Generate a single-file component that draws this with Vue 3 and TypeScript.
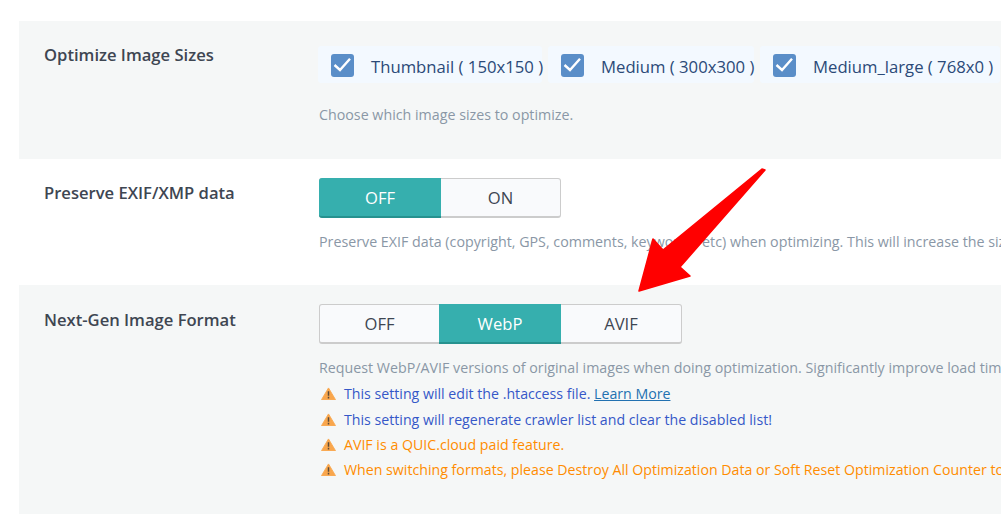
<script setup lang="ts">
interface Size { label: string; width: number }
const sizes: Size[] = [
  { label: 'Thumbnail ( 150x150 )', width: 224 },
  { label: 'Medium ( 300x300 )', width: 206 },
  { label: 'Medium_large ( 768x0 )', width: 240 },
]
const notes = [
  { text: 'This setting will edit the .htaccess file.', cls: 'blue', link: 'Learn More' },
  { text: 'This setting will regenerate crawler list and clear the disabled list!', cls: 'blue', link: '' },
  { text: 'AVIF is a QUIC.cloud paid feature.', cls: 'orange', link: '' },
  { text: 'When switching formats, please Destroy All Optimization Data or Soft Reset Optimization Counter to apply the new format.', cls: 'orange', link: '' },
]
</script>

<template>
  <div class="page">
    <section class="row shaded first">
      <h3 class="label">Optimize Image Sizes</h3>
      <div class="body">
        <div class="checks">
          <label v-for="s in sizes" :key="s.label" class="check" :style="{ width: s.width + 'px' }">
            <span class="box">
              <svg width="23" height="23" viewBox="0 0 23 23"><path d="M3.5 11l5.5 5L19 4.8" fill="none" stroke="#fff" stroke-width="2.4" /></svg>
            </span>
            <span class="check-text">{{ s.label }}</span>
          </label>
        </div>
        <p class="desc choose">Choose which image sizes to optimize.</p>
      </div>
    </section>

    <section class="row second">
      <h3 class="label">Preserve EXIF/XMP data</h3>
      <div class="body">
        <div class="toggle">
          <span class="seg on w122">OFF</span>
          <span class="seg w119">ON</span>
        </div>
        <p class="desc exif">Preserve EXIF data (copyright, GPS, comments, keywords, etc) when optimizing. This will increase the size of the optimized files.</p>
      </div>
    </section>

    <section class="row shaded third">
      <h3 class="label">Next-Gen Image Format</h3>
      <div class="body">
        <div class="toggle">
          <span class="seg w119">OFF</span>
          <span class="seg on w122">WebP</span>
          <span class="seg w120">AVIF</span>
        </div>
        <p class="desc request">Request WebP/AVIF versions of original images when doing optimization. Significantly improve load time by using next-gen formats.</p>
        <p v-for="n in notes" :key="n.text" class="note" :class="n.cls">
          <svg class="warn" width="15" height="13" viewBox="0 0 16 14">
            <path d="M8 1L15.5 13.6H.5z" fill="#f9a64c" stroke="#f9a64c" stroke-linejoin="round" />
            <path d="M7.2 4.5h1.6v5h-1.6zM7.2 10.6h1.6v1.8h-1.6z" fill="#5a4a3a" />
          </svg>
          <span>{{ n.text }}<template v-if="n.link">&nbsp;<a class="link">{{ n.link }}</a></template></span>
        </p>
      </div>
    </section>

    <svg class="arrow" width="1001" height="520" viewBox="0 0 1001 520">
      <path d="M765 170L680 267 690 276 639 291 653 239 663 250 762 169z" fill="#ff0000" stroke="#ff0000" stroke-width="1.5" stroke-linejoin="round" />
    </svg>
  </div>
</template>

<style>
html, body { margin: 0; background: #fff; overflow: hidden; }
</style>

<style scoped>
.page {
  position: relative;
  width: 1001px;
  height: 520px;
  overflow: hidden;
  padding: 21px 0 0 19px;
  box-sizing: border-box;
  font-family: "Open Sans", "Noto Sans", sans-serif;
  color: #3c4858;
}
.row { display: flex; width: 1100px; box-sizing: border-box; padding-left: 25px; }
.shaded { background: #f5f7f7; }
.first { height: 138px; padding-top: 23px; }
.second { height: 126px; padding-top: 19px; }
.third { height: 229px; padding-top: 19px; }
.label {
  width: 275px;
  flex: none;
  margin: 0;
  font-size: 16.6px;
  font-weight: 600;
  line-height: 22px;
  color: #3e4652;
}
.second .label { margin-top: 4px; }
.third .label { margin-top: 5px; }
.body { flex: 1; min-width: 0; white-space: nowrap; }
.checks { display: flex; gap: 6px; height: 37px; margin-top: 2px; margin-left: -1px; }
.check {
  display: flex;
  align-items: center;
  flex: none;
  height: 37px;
  background: #f3f9ff;
  border-radius: 3px;
  box-sizing: border-box;
  padding: 1px 0 0 13px;
  font-size: 16.7px;
  color: #2b4a78;
}
.box {
  width: 23px;
  height: 23px;
  flex: none;
  background: #5a8ec8;
  border-radius: 3px;
  display: flex;
}
.check-text { margin: 2px 0 0 17px; }
.desc {
  margin: 0;
  font-size: 14.25px;
  line-height: 20px;
  color: #8a97a6;
}
.choose { margin-top: 22px; }
.exif { margin-top: 14px; }
.request { margin-top: 14px; }
.toggle {
  display: inline-flex;
  border: 1px solid #ccc;
  border-bottom: 2px solid #ccc;
  border-radius: 3px;
  background: #f9fafc;
  height: 40px;
  box-sizing: border-box;
}
.seg {
  display: flex;
  align-items: center;
  justify-content: center;
  font-size: 16.6px;
  color: #3e4652;
}
.seg.on {
  background: #36afae;
  color: #fff;
  margin: -1px 0 -2px;
  height: 40px;
  border-bottom: 2px solid #26928f;
  box-sizing: border-box;
}
.second .seg.on { margin-left: -1px; border-radius: 3px 0 0 3px; }
.w119 { width: 119px; }
.w120 { width: 120px; }
.w122 { width: 122px; }
.note {
  display: flex;
  align-items: center;
  margin: 0;
  height: 25.4px;
  font-size: 14.18px;
}
.request + .note { margin-top: 3px; }
.warn { flex: none; margin-right: 8px; margin-left: 2px; }
.blue { color: #3558c8; }
.orange { color: #ff8c00; }
.link { color: #2271b1; text-decoration: underline; }
.arrow { position: absolute; left: 0; top: 0; pointer-events: none; }
</style>
